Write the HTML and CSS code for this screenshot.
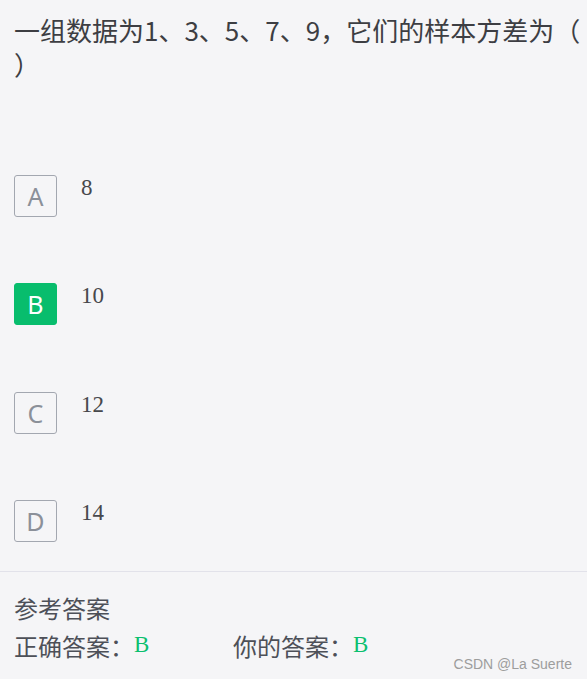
FILE: index.html
```html
<!DOCTYPE html>
<html lang="zh-CN">
<head>
<meta charset="utf-8">
<title>样本方差</title>
<link rel="stylesheet" href="styles.css">
</head>
<body>
<div class="page">
  <div class="title">一组数据为1、3、5、7、9，它们的样本方差为（）</div>
  <div class="options">
    <div class="option">
      <span class="key">A</span>
      <span class="val">8</span>
    </div>
    <div class="option">
      <span class="key key-on">B</span>
      <span class="val">10</span>
    </div>
    <div class="option">
      <span class="key">C</span>
      <span class="val">12</span>
    </div>
    <div class="option">
      <span class="key">D</span>
      <span class="val">14</span>
    </div>
  </div>
  <div class="answer">
    <div class="ans-head">参考答案</div>
    <div class="ans-row">
      <div class="ans-item ans-first">正确答案：<span class="ans-val">B</span></div>
      <div class="ans-item">你的答案：<span class="ans-val">B</span></div>
    </div>
  </div>
  <div class="mark">CSDN @La Suerte</div>
</div>
</body>
</html>
```

FILE: styles.css
```css
html, body {
  margin: 0;
  padding: 0;
  background: #f5f5f7;
}
.page {
  position: relative;
  width: 587px;
  height: 679px;
  overflow: hidden;
  font-family: "Noto Sans CJK SC", "Noto Sans", sans-serif;
}
.title {
  padding: 13px 6px 0 14px;
  font-size: 26px;
  line-height: 34px;
  color: #3d3e43;
  line-break: anywhere;
}
.options {
  margin-top: 94px;
  padding-left: 14px;
  display: flex;
  flex-direction: column;
  gap: 66.33px;
}
.option {
  display: flex;
  align-items: flex-start;
  gap: 24px;
  height: 42px;
}
.key {
  box-sizing: border-box;
  width: 43px;
  height: 42px;
  border: 1px solid #a3a7b0;
  border-radius: 3px;
  display: flex;
  align-items: center;
  justify-content: center;
  font-family: "Noto Sans", sans-serif;
  font-size: 25px;
  color: #8b9099;
}
.key-on {
  background: #08bd6d;
  border-color: #08bd6d;
  color: #ffffff;
}
.val {
  font-family: "Liberation Serif", serif;
  font-size: 23px;
  line-height: 26px;
  color: #47484c;
}
.answer {
  margin-top: 29px;
  border-top: 1px solid #e2e2ea;
  padding: 17px 14px 0 14px;
  font-size: 24px;
  line-height: 37.5px;
  color: #4d5058;
}
.ans-row {
  display: flex;
}
.ans-first {
  width: 219px;
}
.ans-val {
  font-family: "Liberation Serif", serif;
  font-size: 23px;
  color: #0bbf6f;
  vertical-align: 4px;
}
.mark {
  position: absolute;
  right: 15px;
  bottom: 6px;
  font-family: "Liberation Sans", sans-serif;
  font-size: 14px;
  line-height: 18px;
  color: #9d9d9d;
}
```
